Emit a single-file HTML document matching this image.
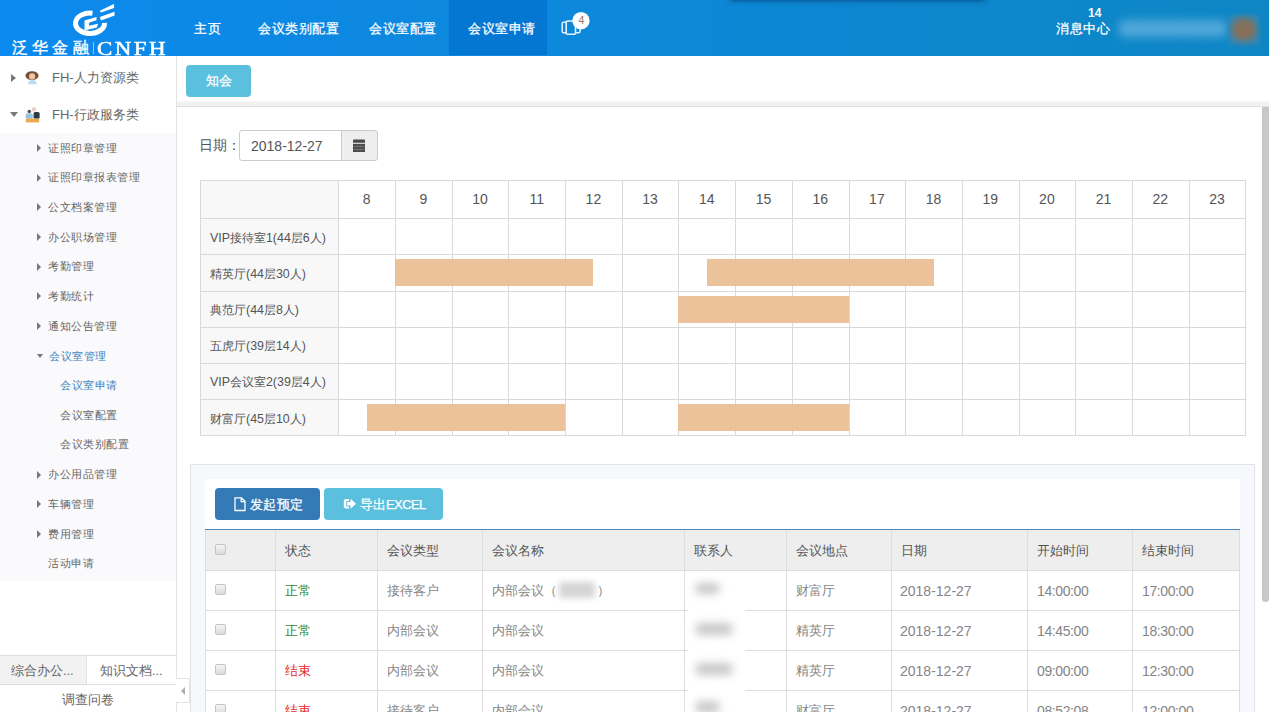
<!DOCTYPE html>
<html><head><meta charset="utf-8">
<style>
*{box-sizing:border-box;margin:0;padding:0}
html,body{width:1269px;height:712px;overflow:hidden;background:#fff}
body{position:relative;font-family:"Liberation Sans",sans-serif;color:#666;font-size:13px}
.a{position:absolute;white-space:nowrap}
#hdr{position:absolute;left:0;top:0;width:1269px;height:56px;background:linear-gradient(to right,#0c89ee,#0d88d8 50%,#0e86c4);overflow:hidden}
#hdr .nav{position:absolute;top:21px;color:#fff;font-size:13px;letter-spacing:.6px;line-height:16px;-webkit-text-stroke:.25px #fff}
#act{position:absolute;left:449px;top:0;width:98px;height:55px;background:#0377d2}
#shadow{position:absolute;left:730px;top:-20px;width:255px;height:20px;box-shadow:0 1px 5px rgba(0,40,90,.55)}
#side{position:absolute;left:0;top:56px;width:177px;height:656px;background:#fff;border-right:1px solid #e3e3e3}
#side .sub{position:absolute;left:0;top:77px;width:176px;height:448px;background:#fafafc}
.cr{position:absolute;width:0;height:0;border-top:4px solid transparent;border-bottom:4px solid transparent;border-left:4px solid #777}
.cd{position:absolute;width:0;height:0;border-left:4px solid transparent;border-right:4px solid transparent;border-top:4px solid #777}
.si{position:absolute;font-size:11.2px;letter-spacing:.5px;line-height:14px;color:#666;white-space:nowrap}
.top1{position:absolute;font-size:13px;line-height:16px;color:#666;white-space:nowrap}
#topbar{position:absolute;left:177px;top:56px;width:1092px;height:46px;background:#fff}
#sep{position:absolute;left:177px;top:101px;width:1092px;height:6px;background:linear-gradient(#fafafa,#f0f0f0 40%,#f3f3f3);border-bottom:1px solid #dedede}
.btn{position:absolute;color:#fff;font-size:13px;text-align:center;border-radius:4px;white-space:nowrap;-webkit-text-stroke:.25px #fff}
#scroll{position:absolute;left:1262px;top:107px;width:7px;height:495px;background:#c8c8c8;border-radius:0 0 3px 3px}
table{border-collapse:collapse}
#tl{position:absolute;left:200px;top:180px;table-layout:fixed}
#tl td{border:1px solid #ddd;height:36.2px;padding:0}
#tl tr.h td{height:38px;text-align:center;font-size:14px;color:#333}
#tl td.lab{background:#f6f6f6;font-size:12.2px;color:#555;padding-left:9px;white-space:nowrap}
.bar{position:absolute;height:27px;background:#e9bd92;opacity:.93}
#panel{position:absolute;left:190px;top:464px;width:1065px;height:260px;background:#f7f8fb;border:1px solid #e2e3e8}
#inner{position:absolute;left:205px;top:479px;width:1035px;height:240px;background:#fff}
#lt{position:absolute;left:205px;top:530px;table-layout:fixed}
#lt td{border:1px solid #ddd;height:40px;padding:2px 0 0 9px;font-size:13px;color:#858585;white-space:nowrap;overflow:hidden}
#lt tr.h td{background:#eee;color:#555;height:40px;border-top:0;padding-top:3px}
#lt td.n{font-size:14px;letter-spacing:-.4px}#lt td.d{font-size:14px;padding-left:8px}
.cb{display:inline-block;width:11px;height:11px;border:1px solid #c4c4c4;border-radius:2px;background:linear-gradient(#f4f4f4,#dcdcdc);vertical-align:middle;margin-left:0;position:relative;top:-3px}
</style></head><body>

<div id="hdr">
  <div id="shadow"></div>
  <div id="act"></div>
  <!-- logo -->
  <svg class="a" style="left:65px;top:0" width="60" height="40" viewBox="0 0 60 40">
    <path d="M27.5 13.2 A14.5 10.2 0 1 0 39.5 22.8" fill="none" stroke="#fff" stroke-width="5"/>
    <path d="M19.5 20.5 L31.5 17 L31.5 20.3 L24 22.8 L24 25.7 L33 23.8 L32 27.5 L19.5 30.5 Z" fill="#fff"/>
    <path d="M34.8 10.7 L48.9 3.9 L49.2 7.9 L36 12.6 Z" fill="#fff"/>
    <path d="M34.8 17 L49.4 11.8 L49.7 15.5 L36 20.5 Z" fill="#fff"/>
  </svg>
  <div class="a" style="left:12px;top:40px;font-family:'Liberation Serif',serif;font-size:15.5px;line-height:16px;color:#fff;letter-spacing:4.2px;-webkit-text-stroke:.35px #fff">泛华金融</div>
  <div class="a" style="left:93px;top:42px;width:1px;height:12px;background:rgba(255,255,255,.55)"></div>
  <div class="a" style="left:97px;top:38px;font-family:'Liberation Serif',serif;font-size:18.5px;line-height:22px;color:#fff;letter-spacing:2px;transform:scaleX(1.24);transform-origin:0 0;-webkit-text-stroke:.5px #fff">CNFH</div>

  <div class="a nav" style="left:194px">主页</div>
  <div class="a nav" style="left:258px">会议类别配置</div>
  <div class="a nav" style="left:369px">会议室配置</div>
  <div class="a nav" style="left:468px">会议室申请</div>
  <!-- icon -->
  <svg class="a" style="left:558px;top:8px" width="36" height="30" viewBox="0 0 36 30">
    <rect x="4.2" y="14.2" width="7.5" height="10.6" rx="1.2" fill="none" stroke="#dff4ff" stroke-width="1.5"/>
    <rect x="13.5" y="14.2" width="8.5" height="10.6" rx="1.2" fill="none" stroke="#dff4ff" stroke-width="1.5"/>
    <rect x="8.2" y="13" width="9.3" height="13.2" rx="1.2" fill="#0d88d8" stroke="#dff4ff" stroke-width="1.6"/>
    <circle cx="23" cy="12.7" r="8.7" fill="#fff"/>
    <text x="23.3" y="15.7" text-anchor="middle" font-family="Liberation Sans" font-size="10.5" fill="#8a6e5e">4</text>
  </svg>

  <div class="a" style="left:1088px;top:6px;color:#fff;font-size:12px;font-weight:bold;line-height:14px">14</div>
  <div class="a nav" style="left:1056px;top:21px;letter-spacing:.7px">消息中心</div>
  <div class="a" style="left:1118px;top:20px;width:110px;height:17px;border-radius:8px;background:#5eaedc;filter:blur(5px);opacity:.85"></div>
  <div class="a" style="left:1229px;top:15px;width:30px;height:30px;background:#3a88b0;filter:blur(2px);opacity:.8"></div><div class="a" style="left:1232px;top:18px;width:24px;height:23px;border-radius:45%;background:#87705a;filter:blur(3px)"></div>
</div>

<div id="side">
  <div class="sub"></div>
</div>
<div id="sidecontent">
  <div class="cr" style="left:37px;top:144px"></div><div class="si" style="left:48px;top:140.5px">证照印章管理</div>
  <div class="cr" style="left:37px;top:173.5px"></div><div class="si" style="left:48px;top:170.0px">证照印章报表管理</div>
  <div class="cr" style="left:37px;top:203.2px"></div><div class="si" style="left:48px;top:199.7px">公文档案管理</div>
  <div class="cr" style="left:37px;top:233px"></div><div class="si" style="left:48px;top:229.5px">办公职场管理</div>
  <div class="cr" style="left:37px;top:262.7px"></div><div class="si" style="left:48px;top:259.2px">考勤管理</div>
  <div class="cr" style="left:37px;top:292.4px"></div><div class="si" style="left:48px;top:288.9px">考勤统计</div>
  <div class="cr" style="left:37px;top:322.1px"></div><div class="si" style="left:48px;top:318.6px">通知公告管理</div>
  <div class="cd" style="left:37px;top:353.8px;border-width:4px 3px 0 3px;border-top-color:#777"></div><div class="si" style="left:49px;top:349.3px;color:#4083bf">会议室管理</div>
  <div class="si" style="left:60px;top:378.0px;color:#4083bf">会议室申请</div>
  <div class="si" style="left:60px;top:407.7px">会议室配置</div>
  <div class="si" style="left:60px;top:437.4px">会议类别配置</div>
  <div class="cr" style="left:37px;top:470.6px"></div><div class="si" style="left:48px;top:467.1px">办公用品管理</div>
  <div class="cr" style="left:37px;top:500.3px"></div><div class="si" style="left:48px;top:496.8px">车辆管理</div>
  <div class="cr" style="left:37px;top:530px"></div><div class="si" style="left:48px;top:526.5px">费用管理</div>
  <div class="si" style="left:48px;top:556.2px">活动申请</div>
  <div class="a" style="left:0;top:655px;width:176px;height:30px;border-top:1px solid #ddd;border-bottom:1px solid #ddd;background:#fff"></div>
  <div class="a" style="left:0;top:656px;width:87px;height:28px;background:#f2f2f2;border-right:1px solid #e3e3e3"></div>
  <div class="a" style="left:11px;top:663px;font-size:12.8px;line-height:16px;color:#666">综合办公...</div>
  <div class="a" style="left:100px;top:663px;font-size:12.8px;line-height:16px;color:#666">知识文档...</div>
  <div class="a" style="left:62px;top:692px;font-size:12.8px;line-height:16px;color:#666">调查问卷</div>
  <div class="a" style="left:176px;top:678px;width:14px;height:25px;background:#fff;border:1px solid #e3e3e3;border-left:none"></div>
  <div class="a" style="left:181px;top:687px;width:0;height:0;border-top:4px solid transparent;border-bottom:4px solid transparent;border-right:4px solid #aaa"></div>

  <div class="cr" style="left:11px;top:74px;border-width:4px 0 4px 5px"></div>
  <svg class="a" style="left:24px;top:70px" width="16" height="16" viewBox="0 0 16 16">
    <ellipse cx="8" cy="5.6" rx="6.6" ry="4.3" fill="#7a5038"/>
    <circle cx="8.1" cy="6.4" r="3.1" fill="#efc6a6"/>
    <path d="M4 14.3 Q4.5 10 8.3 10 Q12.3 10 12.8 14.3 Z" fill="#b9dbee"/>
  </svg>
  <div class="top1" style="left:52px;top:70px">FH-人力资源类</div>

  <div class="cd" style="left:10px;top:112px;border-width:5px 4px 0 4px"></div>
  <svg class="a" style="left:25px;top:106px" width="16" height="17" viewBox="0 0 16 17">
    <circle cx="9" cy="3.4" r="2.3" fill="#e6d2c9"/>
    <rect x="8.6" y="5.9" width="6" height="6.8" rx="1.5" fill="#2d3a46"/>
    <circle cx="4.3" cy="5.6" r="1.8" fill="#4a5560"/>
    <rect x="0.6" y="7.6" width="7.2" height="5.2" rx="1.5" fill="#93c4dc"/>
    <rect x="0.9" y="12.6" width="13.2" height="3.8" fill="#f0a850"/>
  </svg>
  <div class="top1" style="left:52px;top:107px">FH-行政服务类</div>
</div>

<div id="topbar"></div>
<div class="btn" style="left:186px;top:65px;width:65px;height:32px;background:#5bc0de;line-height:32px;font-weight:500">知会</div>
<div id="sep"></div>

<div class="a" style="left:199px;top:139px;font-size:13.6px;line-height:14px;color:#555">日期：</div>
<div class="a" style="left:239px;top:130px;width:103px;height:31px;border:1px solid #ccc;border-radius:3px 0 0 3px;background:#fff"></div>
<div class="a" style="left:251px;top:137.5px;font-size:14px;line-height:16px;color:#555">2018-12-27</div>
<div class="a" style="left:341px;top:130px;width:37px;height:31px;border:1px solid #ccc;border-radius:0 3px 3px 0;background:#eee"></div>
<svg class="a" style="left:352px;top:138px" width="14" height="15" viewBox="0 0 14 15">
  <path d="M1 2.4 Q1 1.6 2 1.6 H4 Q4.6 0.8 5.2 1.6 H8.8 Q9.4 0.8 10 1.6 H12 Q13 1.6 13 2.4 V4.8 H1 Z" fill="#4a4a4a"/>
  <rect x="1" y="5.8" width="12" height="8.2" fill="#4a4a4a"/>
  <rect x="1.5" y="8.3" width="11" height="0.7" fill="#888"/><rect x="1.5" y="11" width="11" height="0.7" fill="#888"/>
  <rect x="5" y="6" width="0.6" height="8" fill="#6a6a6a"/><rect x="8.6" y="6" width="0.6" height="8" fill="#6a6a6a"/>
</svg>
<div class="a" style="left:200px;top:180px;width:138px;height:256px;background:#f8f8f8"></div>
<div class="a" style="left:200px;top:180px;width:1046px;height:1px;background:#d9d9d9"></div>
<div class="a" style="left:200px;top:218px;width:1046px;height:1px;background:#d9d9d9"></div>
<div class="a" style="left:200px;top:254px;width:1046px;height:1px;background:#d9d9d9"></div>
<div class="a" style="left:200px;top:291px;width:1046px;height:1px;background:#d9d9d9"></div>
<div class="a" style="left:200px;top:327px;width:1046px;height:1px;background:#d9d9d9"></div>
<div class="a" style="left:200px;top:363px;width:1046px;height:1px;background:#d9d9d9"></div>
<div class="a" style="left:200px;top:399px;width:1046px;height:1px;background:#d9d9d9"></div>
<div class="a" style="left:200px;top:435px;width:1046px;height:1px;background:#d9d9d9"></div>
<div class="a" style="left:200px;top:180px;width:1px;height:256px;background:#d9d9d9"></div>
<div class="a" style="left:338px;top:180px;width:1px;height:256px;background:#d9d9d9"></div>
<div class="a" style="left:395px;top:180px;width:1px;height:256px;background:#d9d9d9"></div>
<div class="a" style="left:452px;top:180px;width:1px;height:256px;background:#d9d9d9"></div>
<div class="a" style="left:508px;top:180px;width:1px;height:256px;background:#d9d9d9"></div>
<div class="a" style="left:565px;top:180px;width:1px;height:256px;background:#d9d9d9"></div>
<div class="a" style="left:622px;top:180px;width:1px;height:256px;background:#d9d9d9"></div>
<div class="a" style="left:678px;top:180px;width:1px;height:256px;background:#d9d9d9"></div>
<div class="a" style="left:735px;top:180px;width:1px;height:256px;background:#d9d9d9"></div>
<div class="a" style="left:792px;top:180px;width:1px;height:256px;background:#d9d9d9"></div>
<div class="a" style="left:849px;top:180px;width:1px;height:256px;background:#d9d9d9"></div>
<div class="a" style="left:905px;top:180px;width:1px;height:256px;background:#d9d9d9"></div>
<div class="a" style="left:962px;top:180px;width:1px;height:256px;background:#d9d9d9"></div>
<div class="a" style="left:1019px;top:180px;width:1px;height:256px;background:#d9d9d9"></div>
<div class="a" style="left:1075px;top:180px;width:1px;height:256px;background:#d9d9d9"></div>
<div class="a" style="left:1132px;top:180px;width:1px;height:256px;background:#d9d9d9"></div>
<div class="a" style="left:1189px;top:180px;width:1px;height:256px;background:#d9d9d9"></div>
<div class="a" style="left:1245px;top:180px;width:1px;height:256px;background:#d9d9d9"></div>
<div class="a" style="left:346.6px;top:191px;width:40px;text-align:center;font-size:14px;line-height:16px;color:#555">8</div>
<div class="a" style="left:403.3px;top:191px;width:40px;text-align:center;font-size:14px;line-height:16px;color:#555">9</div>
<div class="a" style="left:460.0px;top:191px;width:40px;text-align:center;font-size:14px;line-height:16px;color:#555">10</div>
<div class="a" style="left:516.7px;top:191px;width:40px;text-align:center;font-size:14px;line-height:16px;color:#555">11</div>
<div class="a" style="left:573.4px;top:191px;width:40px;text-align:center;font-size:14px;line-height:16px;color:#555">12</div>
<div class="a" style="left:630.1px;top:191px;width:40px;text-align:center;font-size:14px;line-height:16px;color:#555">13</div>
<div class="a" style="left:686.8px;top:191px;width:40px;text-align:center;font-size:14px;line-height:16px;color:#555">14</div>
<div class="a" style="left:743.5px;top:191px;width:40px;text-align:center;font-size:14px;line-height:16px;color:#555">15</div>
<div class="a" style="left:800.2px;top:191px;width:40px;text-align:center;font-size:14px;line-height:16px;color:#555">16</div>
<div class="a" style="left:856.9px;top:191px;width:40px;text-align:center;font-size:14px;line-height:16px;color:#555">17</div>
<div class="a" style="left:913.5px;top:191px;width:40px;text-align:center;font-size:14px;line-height:16px;color:#555">18</div>
<div class="a" style="left:970.2px;top:191px;width:40px;text-align:center;font-size:14px;line-height:16px;color:#555">19</div>
<div class="a" style="left:1026.9px;top:191px;width:40px;text-align:center;font-size:14px;line-height:16px;color:#555">20</div>
<div class="a" style="left:1083.6px;top:191px;width:40px;text-align:center;font-size:14px;line-height:16px;color:#555">21</div>
<div class="a" style="left:1140.3px;top:191px;width:40px;text-align:center;font-size:14px;line-height:16px;color:#555">22</div>
<div class="a" style="left:1197.0px;top:191px;width:40px;text-align:center;font-size:14px;line-height:16px;color:#555">23</div>
<div class="a" style="left:210px;top:229.6px;font-size:12.4px;line-height:16px;color:#555">VIP接待室1(44层6人)</div>
<div class="a" style="left:210px;top:265.7px;font-size:12.4px;line-height:16px;color:#555">精英厅(44层30人)</div>
<div class="a" style="left:210px;top:301.9px;font-size:12.4px;line-height:16px;color:#555">典范厅(44层8人)</div>
<div class="a" style="left:210px;top:338.1px;font-size:12.4px;line-height:16px;color:#555">五虎厅(39层14人)</div>
<div class="a" style="left:210px;top:374.3px;font-size:12.4px;line-height:16px;color:#555">VIP会议室2(39层4人)</div>
<div class="a" style="left:210px;top:410.5px;font-size:12.4px;line-height:16px;color:#555">财富厅(45层10人)</div>
<div class="bar" style="left:395px;top:259px;width:198px"></div>
<div class="bar" style="left:707px;top:259px;width:227px"></div>
<div class="bar" style="left:678px;top:296px;width:171px"></div>
<div class="bar" style="left:367px;top:404px;width:198px"></div>
<div class="bar" style="left:678px;top:404px;width:171px"></div>
<div id="panel"></div><div id="inner"></div><div class="a" style="left:205px;top:529px;width:1035px;height:1px;background:#4a88bc"></div>
<div class="btn" style="left:215px;top:488px;width:105px;height:32px;background:#337ab7;line-height:32px;font-weight:500"><svg style="position:absolute;left:19px;top:9px" width="12" height="15" viewBox="0 0 12 15"><path d="M1 0.8 H7.5 L11 4.3 V13.5 H1 Z M7.2 0.8 V4.6 H11" fill="none" stroke="#fff" stroke-width="1.3"/></svg><span style="position:absolute;left:35px;top:1px;letter-spacing:.3px">发起预定</span></div>
<div class="btn" style="left:324px;top:488px;width:119px;height:32px;background:#5bc0de;line-height:32px;font-weight:500"><svg style="position:absolute;left:19px;top:10px" width="14" height="12" viewBox="0 0 14 12"><path d="M6 1 H3 Q0.8 1 0.8 3.2 V8.3 Q0.8 10.5 3 10.5 H6 V8.4 H3.3 V3.1 H6 Z" fill="#fff"/><path d="M4.2 4 H7.6 V0.7 L13 5.75 L7.6 10.8 V7.5 H4.2 Z" fill="#fff"/></svg><span style="position:absolute;left:36px;top:1px">导出<span style="letter-spacing:-.6px">EXCEL</span></span></div>
<table id="lt"><colgroup><col style="width:70px"><col style="width:102px"><col style="width:105px"><col style="width:202px"><col style="width:102px"><col style="width:105px"><col style="width:136px"><col style="width:105px"><col style="width:107px"></colgroup><tr class="h"><td><span class=cb></span></td><td>状态</td><td>会议类型</td><td>会议名称</td><td>联系人</td><td>会议地点</td><td>日期</td><td>开始时间</td><td>结束时间</td></tr><tr><td><span class="cb"></span></td><td><span style="color:#2f872f">正常</span></td><td>接待客户</td><td>内部会议（<span style="display:inline-block;width:40px"></span>）</td><td></td><td>财富厅</td><td class=d>2018-12-27</td><td class=n>14:00:00</td><td class=n>17:00:00</td></tr><tr><td><span class="cb"></span></td><td><span style="color:#2f872f">正常</span></td><td>内部会议</td><td>内部会议</td><td></td><td>精英厅</td><td class=d>2018-12-27</td><td class=n>14:45:00</td><td class=n>18:30:00</td></tr><tr><td><span class="cb"></span></td><td><span style="color:#e52a2a">结束</span></td><td>内部会议</td><td>内部会议</td><td></td><td>精英厅</td><td class=d>2018-12-27</td><td class=n>09:00:00</td><td class=n>12:30:00</td></tr><tr><td><span class="cb"></span></td><td><span style="color:#e52a2a">结束</span></td><td>接待客户</td><td>内部会议</td><td></td><td>财富厅</td><td class=d>2018-12-27</td><td class=n>08:52:08</td><td class=n>12:00:00</td></tr></table>
<div class="a" style="left:688px;top:609px;width:57px;height:3px;background:#fff"></div>
<div class="a" style="left:688px;top:649px;width:57px;height:3px;background:#fff"></div>
<div class="a" style="left:688px;top:689px;width:57px;height:3px;background:#fff"></div>
<div class="a" style="left:695px;top:583px;width:25px;height:11px;border-radius:6px;background:#c8c8c8;filter:blur(4px)"></div>
<div class="a" style="left:695px;top:623px;width:38px;height:12px;border-radius:7px;background:#c8c8c8;filter:blur(4px)"></div>
<div class="a" style="left:695px;top:663px;width:38px;height:12px;border-radius:7px;background:#c8c8c8;filter:blur(4px)"></div>
<div class="a" style="left:695px;top:701px;width:25px;height:12px;border-radius:7px;background:#c8c8c8;filter:blur(4px)"></div>
<div class="a" style="left:559px;top:582px;width:36px;height:16px;border-radius:4px;background:#d4d4d4;filter:blur(3px)"></div>
<div id="scroll"></div>

</body></html>
